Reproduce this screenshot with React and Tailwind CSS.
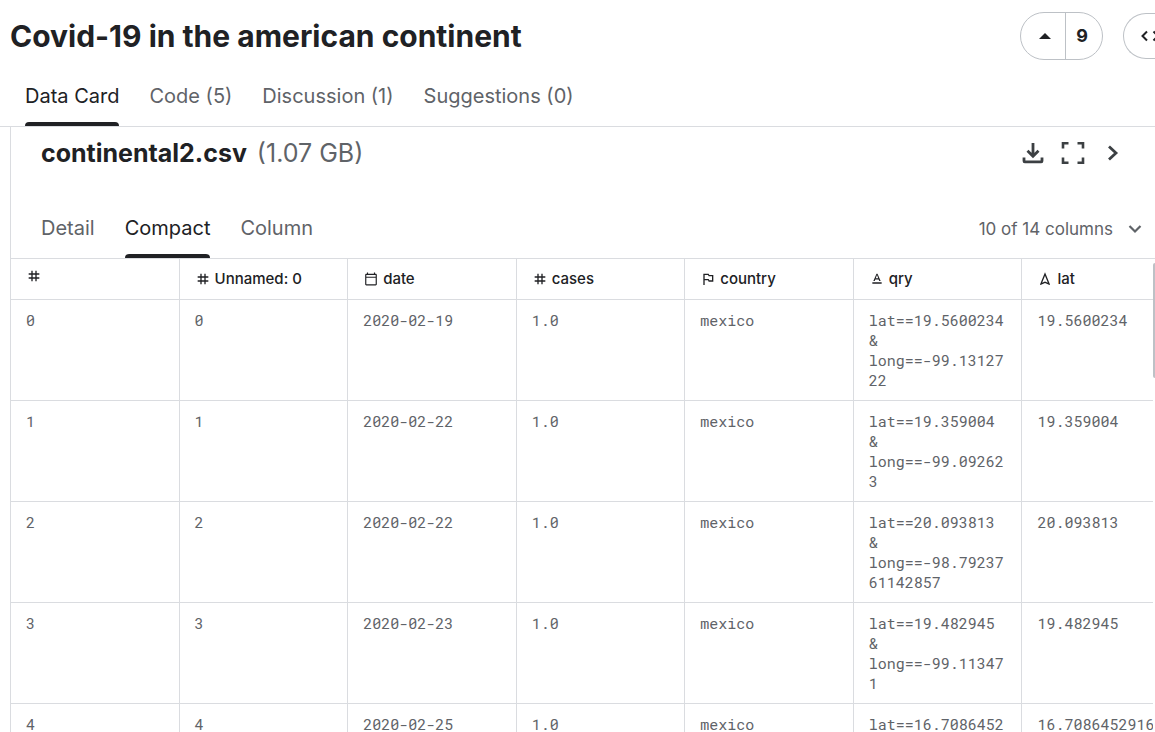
import { MdTag, MdOutlineCalendarToday, MdOutlinedFlag, MdTextFormat, MdOutlineNavigation } from "react-icons/md";

const columns = [
  { name: "", icon: MdTag },
  { name: "Unnamed: 0", icon: MdTag },
  { name: "date", icon: MdOutlineCalendarToday },
  { name: "cases", icon: MdTag },
  { name: "country", icon: MdOutlinedFlag },
  { name: "qry", icon: MdTextFormat },
  { name: "lat", icon: MdOutlineNavigation },
];

const rows = [
  ["0", "0", "2020-02-19", "1.0", "mexico", "lat==19.5600234 & long==-99.1312722", "19.5600234"],
  ["1", "1", "2020-02-22", "1.0", "mexico", "lat==19.359004 & long==-99.092623", "19.359004"],
  ["2", "2", "2020-02-22", "1.0", "mexico", "lat==20.093813 & long==-98.7923761142857", "20.093813"],
  ["3", "3", "2020-02-23", "1.0", "mexico", "lat==19.482945 & long==-99.113471", "19.482945"],
  ["4", "4", "2020-02-25", "1.0", "mexico", "lat==16.7086452916", "16.7086452916"],
];

function Tabs({ label, items, active, className }) {
  return (
    <nav aria-label={label} className={className}>
      {items.map((item) => (
        <button
          key={item}
          type="button"
          aria-current={item === active ? "page" : undefined}
          className={
            item === active
              ? "flex flex-col justify-between whitespace-nowrap text-[#202124] after:block after:h-1 after:w-full after:rounded-t-sm after:bg-[#202124]"
              : "flex flex-col justify-between whitespace-nowrap text-[#5f6368]"
          }
        >
          {item}
        </button>
      ))}
    </nav>
  );
}

export default function App() {
  return (
    <div className="flex h-screen flex-col overflow-hidden bg-white font-['Inter',sans-serif] text-[#202124]">
      <header className="flex shrink-0 items-center justify-between pt-3 pl-[10px]">
        <h1 className="text-[30px] leading-12 font-bold">Covid-19 in the american continent</h1>
        <div className="flex shrink-0 items-center gap-5">
          <div className="flex h-12 overflow-hidden rounded-full border border-[#bdc1c6]">
            <button type="button" aria-label="Upvote" className="flex w-11 items-center justify-center">
              <svg viewBox="0 0 12 6" className="ml-1 h-[6px] w-3" fill="currentColor"><path d="M0 6 6 0l6 6Z" /></svg>
            </button>
            <button type="button" aria-label="9 votes" className="w-[37px] border-l border-[#bdc1c6] pr-1 text-lg font-bold">9</button>
          </div>
          <button type="button" aria-label="Code" className="flex h-[46px] w-8 items-center overflow-hidden rounded-l-full border border-r-0 border-[#bdc1c6] pl-[17px]">
            <svg viewBox="0 0 20 12" className="h-3 w-5 shrink-0" fill="none" stroke="currentColor" strokeWidth="2"><path d="M6 1.500 1.500 6l4.500 4.500M12.500 1.500 17 6l-4.500 4.500" /></svg>
          </button>
        </div>
      </header>

      <Tabs
        label="Dataset sections"
        items={["Data Card", "Code (5)", "Discussion (1)", "Suggestions (0)"]}
        active="Data Card"
        className="flex h-[67px] shrink-0 gap-[30px] border-b border-[#dadce0] pt-[22px] pl-[25px] text-xl leading-7"
      />

      <main className="ml-[10px] flex min-h-0 flex-1 flex-col border-l border-[#dadce0]">
        <div className="flex items-center justify-between pt-2 pr-[30px] pl-[30px]">
          <h2 className="text-[25px] leading-9 font-bold">
            continental2.csv <span className="ml-1 font-normal text-[#5f6368]">(1.07 GB)</span>
          </h2>
          <div className="flex items-center gap-4 text-[#3c4043]">
            <button type="button" aria-label="Download">
              <svg viewBox="0 0 24 24" className="size-6" fill="none" stroke="currentColor" strokeWidth="2.8"><path d="M12 2v13M6.500 9.800l5.500 5.500 5.500-5.500M3 16.500V20q0 .8.8.8h16.400q.8 0 .8-.8v-3.500" /></svg>
            </button>
            <button type="button" aria-label="Fullscreen">
              <svg viewBox="0 0 24 24" className="size-6" fill="none" stroke="currentColor" strokeWidth="2.6"><path d="M2 7.500V2.200h5.500M16.500 2.200H22v5.300M22 16.500v5.300h-5.500M7.500 21.800H2v-5.300" /></svg>
            </button>
            <button type="button" aria-label="Next file">
              <svg viewBox="0 0 24 24" className="size-6" fill="none" stroke="currentColor" strokeWidth="2.8"><path d="m8 5.500 7 6.500-7 6.500" /></svg>
            </button>
          </div>
        </div>

        <div className="flex justify-between border-b border-[#dadce0] pt-8 pr-[10px] pl-[30px]">
          <Tabs
            label="Table view"
            items={["Detail", "Compact", "Column"]}
            active="Compact"
            className="flex h-[55px] gap-[30px] pt-[11px] text-xl leading-7"
          />
          <button type="button" className="flex items-center gap-3 pb-1 text-[17px] leading-7 text-[#5f6368]">
            10 of 14 columns
            <svg viewBox="0 0 20 20" className="size-5" fill="none" stroke="currentColor" strokeWidth="2.2"><path d="m4.500 7 5.500 5.500L15.500 7" /></svg>
          </button>
        </div>

        <div className="flex min-h-0 flex-1">
          <div className="min-w-0 flex-1 overflow-hidden">
            <table className="w-[1180px] table-fixed border-separate border-spacing-0">
              <thead>
                <tr>
                  {columns.map(({ name, icon: Icon }, i) => (
                    <th key={i} scope="col" className="h-[41px] border-r border-b border-[#dadce0] px-[15px] text-left text-[15px] leading-5 font-medium">
                      <span className={name ? "flex items-center gap-1" : "flex items-center pb-[6px]"}>
                        <span className="flex size-4 shrink-0 items-center justify-center">
                          <Icon className={name === "date" ? "size-[14px]" : "size-4"} aria-hidden="true" />
                        </span>
                        {name}
                      </span>
                    </th>
                  ))}
                </tr>
              </thead>
              <tbody className="font-['Roboto_Mono','Liberation_Mono',monospace] text-[15px] leading-5 text-[#5f6368]">
                {rows.map((row) => (
                  <tr key={row[0]} className="align-top">
                    {row.map((value, i) => (
                      <td key={i} className="h-[101px] border-r border-b border-[#dadce0] px-[15px] py-[10px] break-words">{value}</td>
                    ))}
                  </tr>
                ))}
              </tbody>
            </table>
          </div>
          <div className="w-[2px] shrink-0 pt-1" aria-hidden="true">
            <div className="h-[115px] rounded-l-sm bg-[#bdc1c6]" />
          </div>
        </div>
      </main>
    </div>
  );
}
